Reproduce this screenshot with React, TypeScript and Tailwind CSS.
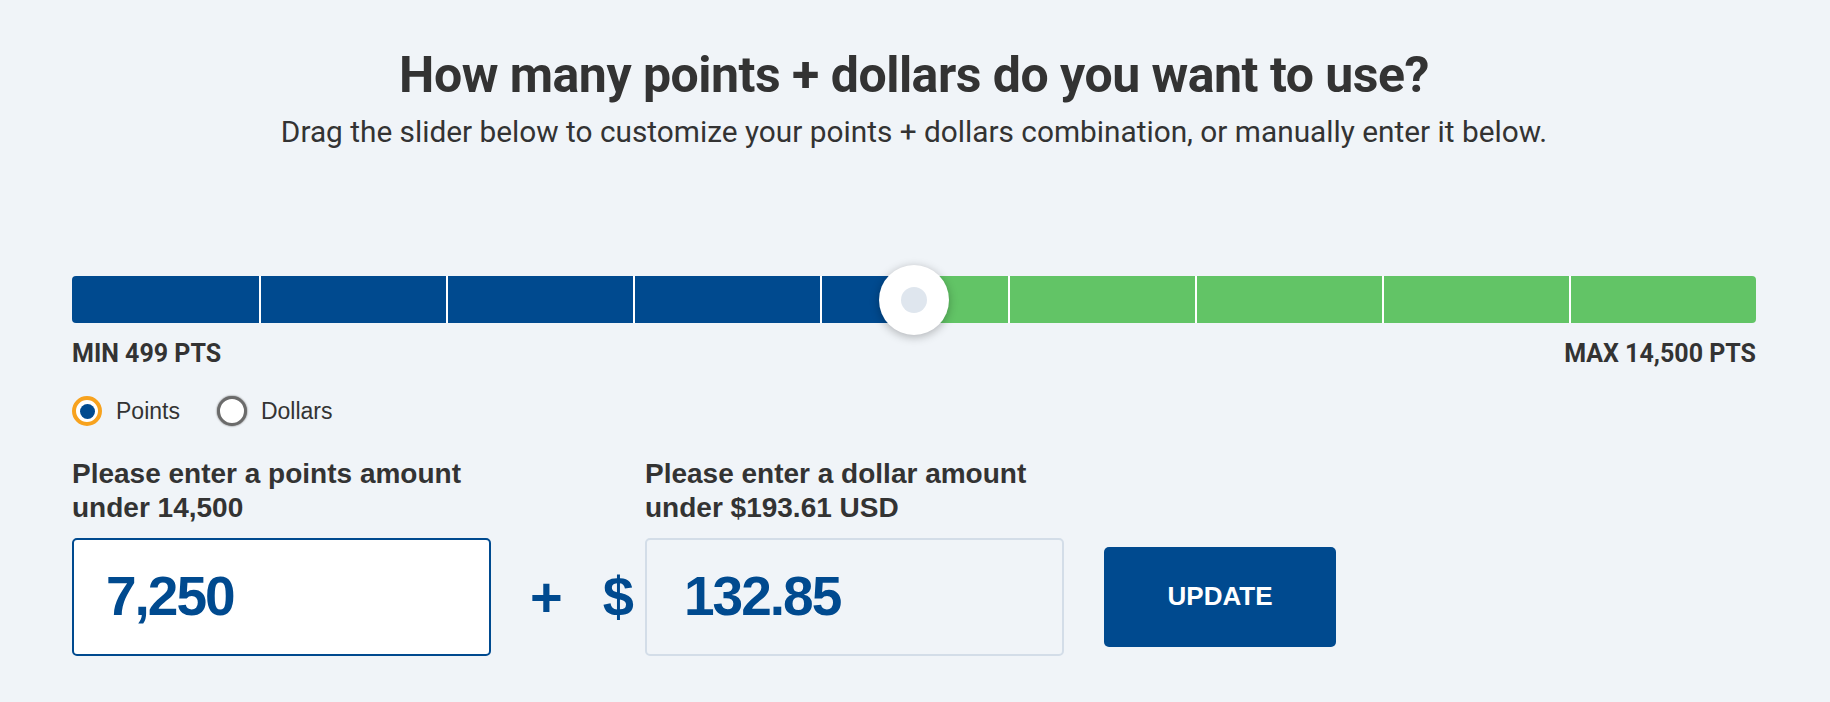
import React from 'react'

const segments = [0, 1, 2, 3, 4, 5, 6, 7, 8]

export default function App() {
  return (
    <div className="min-h-[702px] w-full bg-[#f0f4f8] pl-[72px] pr-[74px] pt-[46px] text-[#333333]">
      {/* Heading */}
      <div className="flex flex-col items-center font-['Roboto',sans-serif]">
        <h1 className="text-[50px] leading-[58px] font-bold tracking-[-0.5px]">
          How many points + dollars do you want to use?
        </h1>
        <p className="mt-[10px] text-[29.8px] leading-[36px]">
          Drag the slider below to customize your points + dollars combination, or manually enter it below.
        </p>
      </div>

      {/* Slider */}
      <div className="relative mt-[126px] h-[47px]">
        <div className="flex h-full overflow-hidden rounded-[4px]">
          <div className="w-1/2 bg-[#004a8f]" />
          <div className="w-1/2 bg-[#62c466]" />
        </div>
        <div className="absolute inset-0 grid grid-cols-9">
          {segments.map((i) => (
            <div key={i} className={i === 0 ? '' : 'border-l-2 border-white'} />
          ))}
        </div>
        <div className="absolute left-1/2 top-1/2 flex h-[70px] w-[70px] -translate-x-1/2 -translate-y-1/2 items-center justify-center rounded-full bg-white shadow-[0_2px_10px_rgba(0,0,0,0.28)]">
          <div className="h-[26px] w-[26px] rounded-full bg-[#dfe6ee]" />
        </div>
      </div>

      <div className="mt-[16px] flex justify-between font-['Roboto',sans-serif] text-[25px] leading-[30px] font-bold">
        <span>MIN 499 PTS</span>
        <span>MAX 14,500 PTS</span>
      </div>

      {/* Radios */}
      <div className="mt-[25px] flex items-center font-['Liberation_Sans',Arial,sans-serif] text-[23px]">
        <label className="flex items-center gap-[14px]">
          <span className="flex h-[30px] w-[30px] items-center justify-center rounded-full border-[4px] border-[#f7a21e] bg-white">
            <span className="h-[15px] w-[15px] rounded-full bg-[#004a8f]" />
          </span>
          Points
        </label>
        <label className="ml-[37px] flex items-center gap-[14px]">
          <span className="h-[30px] w-[30px] rounded-full border-[3px] border-[#6b6b6b] bg-white shadow-[0_0_2px_#555]" />
          Dollars
        </label>
      </div>

      {/* Inputs */}
      <div className="mt-[28px] grid grid-cols-[419px_154px_419px_auto] gap-y-[13px] font-['Liberation_Sans',Arial,sans-serif]">
        <div className="text-[28px] leading-[34px] font-bold">
          Please enter a points amount
          <br />
          under 14,500
        </div>
        <div />
        <div className="text-[28px] leading-[34px] font-bold">
          Please enter a dollar amount
          <br />
          under $193.61 USD
        </div>
        <div />

        <div className="flex h-[118px] items-center rounded-[5px] border-2 border-[#004a8f] bg-white pl-[32px] text-[55px] font-bold tracking-[-2px] text-[#004a8f]">
          7,250
        </div>
        <div className="flex items-center gap-[40px] pl-[39px] text-[56px] font-bold text-[#004a8f]">
          <span>+</span>
          <span>$</span>
        </div>
        <div className="flex h-[118px] items-center rounded-[5px] border-2 border-[#d3dde8] pl-[37px] text-[55px] font-bold tracking-[-2px] text-[#004a8f]">
          132.85
        </div>
        <div className="flex items-center">
          <button className="ml-[40px] h-[100px] w-[232px] rounded-[5px] bg-[#004a8f] text-[26px] font-bold text-white">
            UPDATE
          </button>
        </div>
      </div>
    </div>
  )
}
